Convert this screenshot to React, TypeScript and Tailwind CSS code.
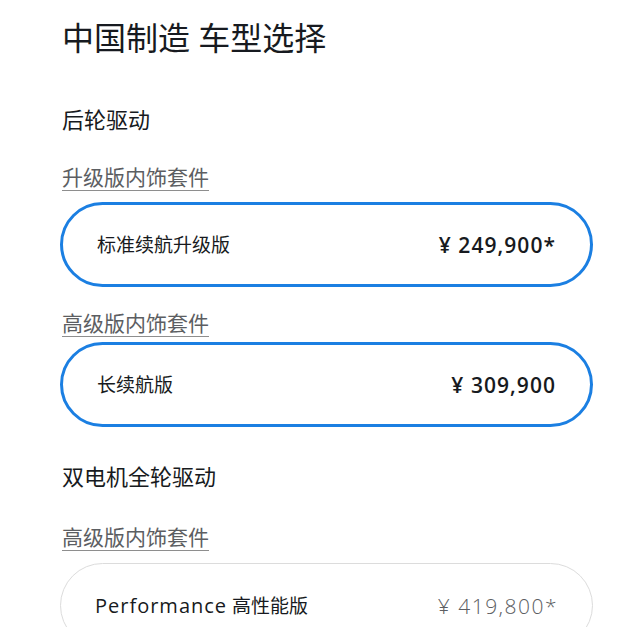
import React from 'react'

type Trim = { name: React.ReactNode; price: string; selected: boolean }

const font = { fontFamily: '"Open Sans", "Noto Sans CJK SC", sans-serif' }

function TrimCard({ trim, className }: { trim: Trim; className?: string }) {
  return (
    <div
      className={
        'flex h-[85px] items-center justify-between rounded-full bg-white pl-[34px] pr-[34px] ' +
        (trim.selected ? 'border-[3px] border-[#1b7fe2] ' : 'border-[1.5px] border-[#dcdcdc] ') +
        (className ?? '')
      }
    >
      <span className="text-[19px] leading-[28px] text-[#171a20]">{trim.name}</span>
      <span
        className={
          'text-[21px] leading-[28px] ' +
          (trim.selected ? 'font-semibold tracking-[0.05em] text-[#171a20]' : 'font-light tracking-[0.07em] text-[#5c5e62]')
        }
      >
        {trim.price}
      </span>
    </div>
  )
}

export default function App() {
  return (
    <div className="min-h-screen bg-white pl-[60px] pr-[47px] pt-[18px]" style={font}>
      <h1 className="pl-[2px] text-[32px] leading-[40px] font-normal text-[#171a20]">中国制造 车型选择</h1>

      <h2 className="mt-[46px] pl-[2px] text-[22px] leading-[30px] text-[#171a20]">后轮驱动</h2>
      <div className="mt-[30px] pl-[2px]">
        <span className="inline-block border-b border-[#8e8e8e] text-[21px] leading-[26px] text-[#5c5e62]">升级版内饰套件</span>
      </div>
      <TrimCard className="mt-[11px]" trim={{ name: '标准续航升级版', price: '¥ 249,900*', selected: true }} />

      <div className="mt-[23px] pl-[2px]">
        <span className="inline-block border-b border-[#8e8e8e] text-[21px] leading-[26px] text-[#5c5e62]">高级版内饰套件</span>
      </div>
      <TrimCard className="mt-[5px]" trim={{ name: '长续航版', price: '¥ 309,900', selected: true }} />

      <h2 className="mt-[34px] pl-[2px] text-[22px] leading-[30px] text-[#171a20]">双电机全轮驱动</h2>
      <div className="mt-[33px] pl-[2px]">
        <span className="inline-block border-b border-[#8e8e8e] text-[21px] leading-[26px] text-[#5c5e62]">高级版内饰套件</span>
      </div>
      <TrimCard
        className="mt-[12px]"
        trim={{
          name: (
            <>
              <span className="text-[20px] tracking-[0.05em]">Performance</span> 高性能版
            </>
          ),
          price: '¥ 419,800*',
          selected: false,
        }}
      />
    </div>
  )
}
